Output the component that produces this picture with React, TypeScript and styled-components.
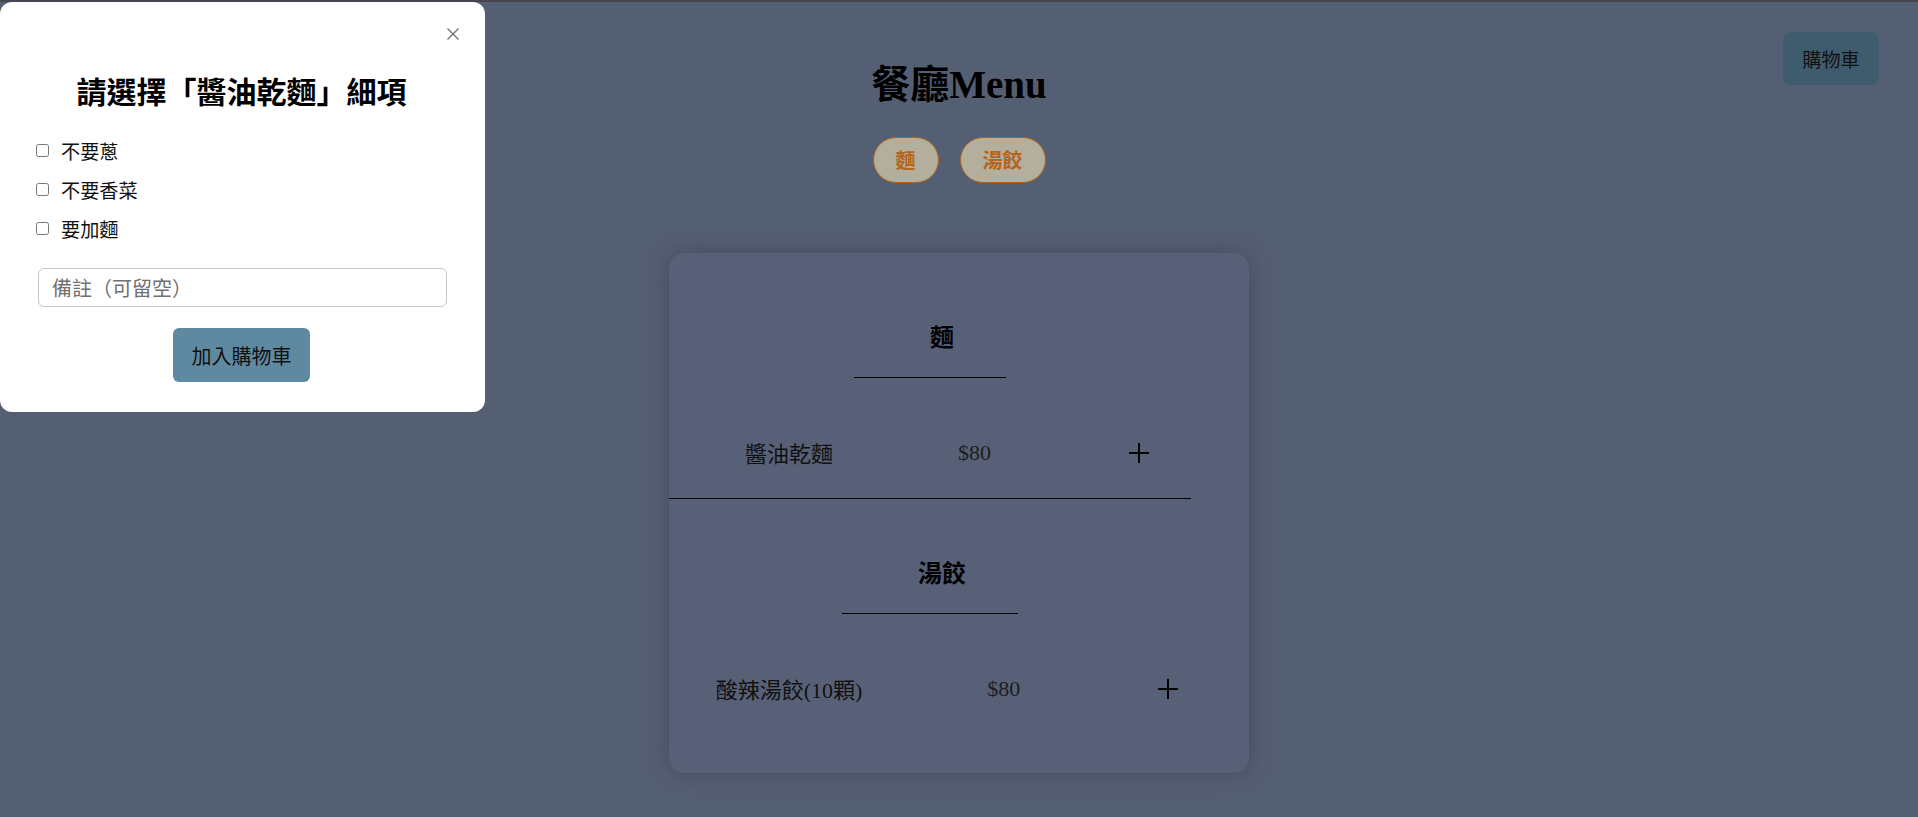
import React from "react";
import styled, { createGlobalStyle } from "styled-components";

const GlobalStyle = createGlobalStyle`
  html, body { margin: 0; padding: 0; }
  body {
    background: #555f74;
    border-top: 2px solid #48444f;
    min-height: 815px;
    font-family: "Liberation Serif", "Noto Sans CJK TC", serif;
    color: #000;
  }
`;

const Page = styled.main`
  display: flex;
  flex-direction: column;
  align-items: center;
`;

const Title = styled.h1`
  margin: 60px 0 0;
  font-size: 39px;
  line-height: 45px;
  font-weight: 700;
  font-family: "Liberation Serif", "Noto Sans CJK TC", serif;
`;

const Pills = styled.div`
  display: flex;
  gap: 21px;
  margin-top: 30px;
`;

const Pill = styled.button`
  height: 46px;
  box-sizing: border-box;
  padding: 0 22px;
  border: 1.5px solid #b0621f;
  border-radius: 23px;
  background: #b4ae9c;
  color: #b5651d;
  font-family: "Noto Sans CJK TC", sans-serif;
  font-weight: 700;
  font-size: 20px;
  line-height: 1;
`;

const CartButton = styled.button`
  position: fixed;
  top: 32px;
  right: 39px;
  width: 96px;
  height: 53px;
  border: none;
  border-radius: 8px;
  background: #3f5b6e;
  color: #111;
  font-family: "Noto Sans CJK TC", sans-serif;
  font-size: 19.2px;
`;

const Card = styled.section`
  margin-top: 70px;
  width: 580px;
  box-sizing: border-box;
  padding: 10px 0 39px;
  background: #576077;
  border-radius: 15px;
  box-shadow: 0 0 22px rgba(40, 45, 60, 0.4);
`;

const Inner = styled.div`
  width: 90%;
`;

const Section = styled.div`
  display: flex;
  flex-direction: column;
  align-items: center;
  padding-top: 58px;
`;

const SectionTitle = styled.h3`
  margin: 0;
  padding: 0 52px 26px 76px;
  border-bottom: 1px solid #000;
  font-family: "Noto Sans CJK TC", sans-serif;
  font-size: 24px;
  line-height: 30px;
  font-weight: 700;
`;

const ItemRow = styled.div<{ $last?: boolean }>`
  align-self: stretch;
  display: flex;
  justify-content: center;
  align-items: center;
  margin-top: 52px;
  min-height: 44px;
  padding: 0 0 24px 35px;
  border-bottom: ${(p) => (p.$last ? "none" : "1px solid #000")};
`;

const ItemName = styled.span`
  font-size: 22px;
  margin-right: 125px;
  color: #111;
`;

const Price = styled.span`
  font-size: 22px;
  color: #1e1e1e;
  position: relative;
  top: 1px;
`;

const PlusButton = styled.button`
  margin-left: 137px;
  width: 22px;
  height: 22px;
  padding: 0;
  border: none;
  background: none;
  display: flex;
  position: relative;
  top: 1px;
`;

const Overlay = styled.div`
  position: fixed;
  left: 0;
  top: 2px;
  width: 485px;
  box-sizing: border-box;
  padding: 70px 38px 30px 36px;
  background: #fff;
  border-radius: 12px;
  display: flex;
  flex-direction: column;
  font-family: "Noto Sans CJK TC", sans-serif;
`;

const CloseButton = styled.button`
  position: absolute;
  top: 25px;
  right: 25px;
  width: 14px;
  height: 14px;
  padding: 0;
  border: none;
  background: none;
  display: flex;
`;

const ModalTitle = styled.h2`
  margin: 0;
  text-align: center;
  font-size: 30px;
  line-height: 36px;
  font-weight: 700;
`;

const Options = styled.div`
  margin-top: 23px;
  display: flex;
  flex-direction: column;
`;

const OptionRow = styled.label`
  height: 39px;
  display: flex;
  align-items: center;
  gap: 12px;
  font-size: 19.2px;
  color: #111;
`;

const Check = styled.input`
  width: 13px;
  height: 13px;
  margin: 0;
`;

const NoteInput = styled.input`
  margin: 20px 0 0 2px;
  width: 409px;
  height: 39px;
  box-sizing: border-box;
  border: 1px solid #c8c8c8;
  border-radius: 6px;
  padding: 0 13px;
  font-family: "Noto Sans CJK TC", sans-serif;
  font-size: 20px;
  outline: none;
  &::placeholder { color: #707070; }
`;

const AddButton = styled.button`
  align-self: center;
  margin-top: 21px;
  width: 137px;
  height: 54px;
  border: none;
  border-radius: 6px;
  background: #5f89a1;
  color: #111;
  font-family: "Noto Sans CJK TC", sans-serif;
  font-size: 20px;
`;

const PlusIcon = () => (
  <svg width="22" height="22" viewBox="0 0 22 22">
    <line x1="11" y1="1" x2="11" y2="21" stroke="#000" strokeWidth="2" />
    <line x1="1" y1="11" x2="21" y2="11" stroke="#000" strokeWidth="2" />
  </svg>
);

const CloseIcon = () => (
  <svg width="14" height="14" viewBox="0 0 14 14">
    <line x1="1.5" y1="1.5" x2="12.5" y2="12.5" stroke="#777" strokeWidth="1.4" />
    <line x1="12.5" y1="1.5" x2="1.5" y2="12.5" stroke="#777" strokeWidth="1.4" />
  </svg>
);

const menu = [
  { category: "麵", items: [{ name: "醬油乾麵", price: 80 }] },
  { category: "湯餃", items: [{ name: "酸辣湯餃(10顆)", price: 80 }] },
];

export default function App() {
  return (
    <>
      <GlobalStyle />
      <Page>
        <Title>餐廳Menu</Title>
        <Pills>
          {menu.map((m) => (
            <Pill key={m.category}>{m.category}</Pill>
          ))}
        </Pills>
        <Card>
          <Inner>
            {menu.map((m, si) => (
              <Section key={m.category}>
                <SectionTitle>{m.category}</SectionTitle>
                {m.items.map((it, ii) => (
                  <ItemRow key={it.name} $last={si === menu.length - 1 && ii === m.items.length - 1}>
                    <ItemName>{it.name}</ItemName>
                    <Price>${it.price}</Price>
                    <PlusButton aria-label="add">
                      <PlusIcon />
                    </PlusButton>
                  </ItemRow>
                ))}
              </Section>
            ))}
          </Inner>
        </Card>
      </Page>
      <CartButton>購物車</CartButton>
      <Overlay>
        <CloseButton aria-label="close">
          <CloseIcon />
        </CloseButton>
        <ModalTitle>請選擇「醬油乾麵」細項</ModalTitle>
        <Options>
          {["不要蔥", "不要香菜", "要加麵"].map((o) => (
            <OptionRow key={o}>
              <Check type="checkbox" />
              {o}
            </OptionRow>
          ))}
        </Options>
        <NoteInput placeholder="備註（可留空）" />
        <AddButton>加入購物車</AddButton>
      </Overlay>
    </>
  );
}
